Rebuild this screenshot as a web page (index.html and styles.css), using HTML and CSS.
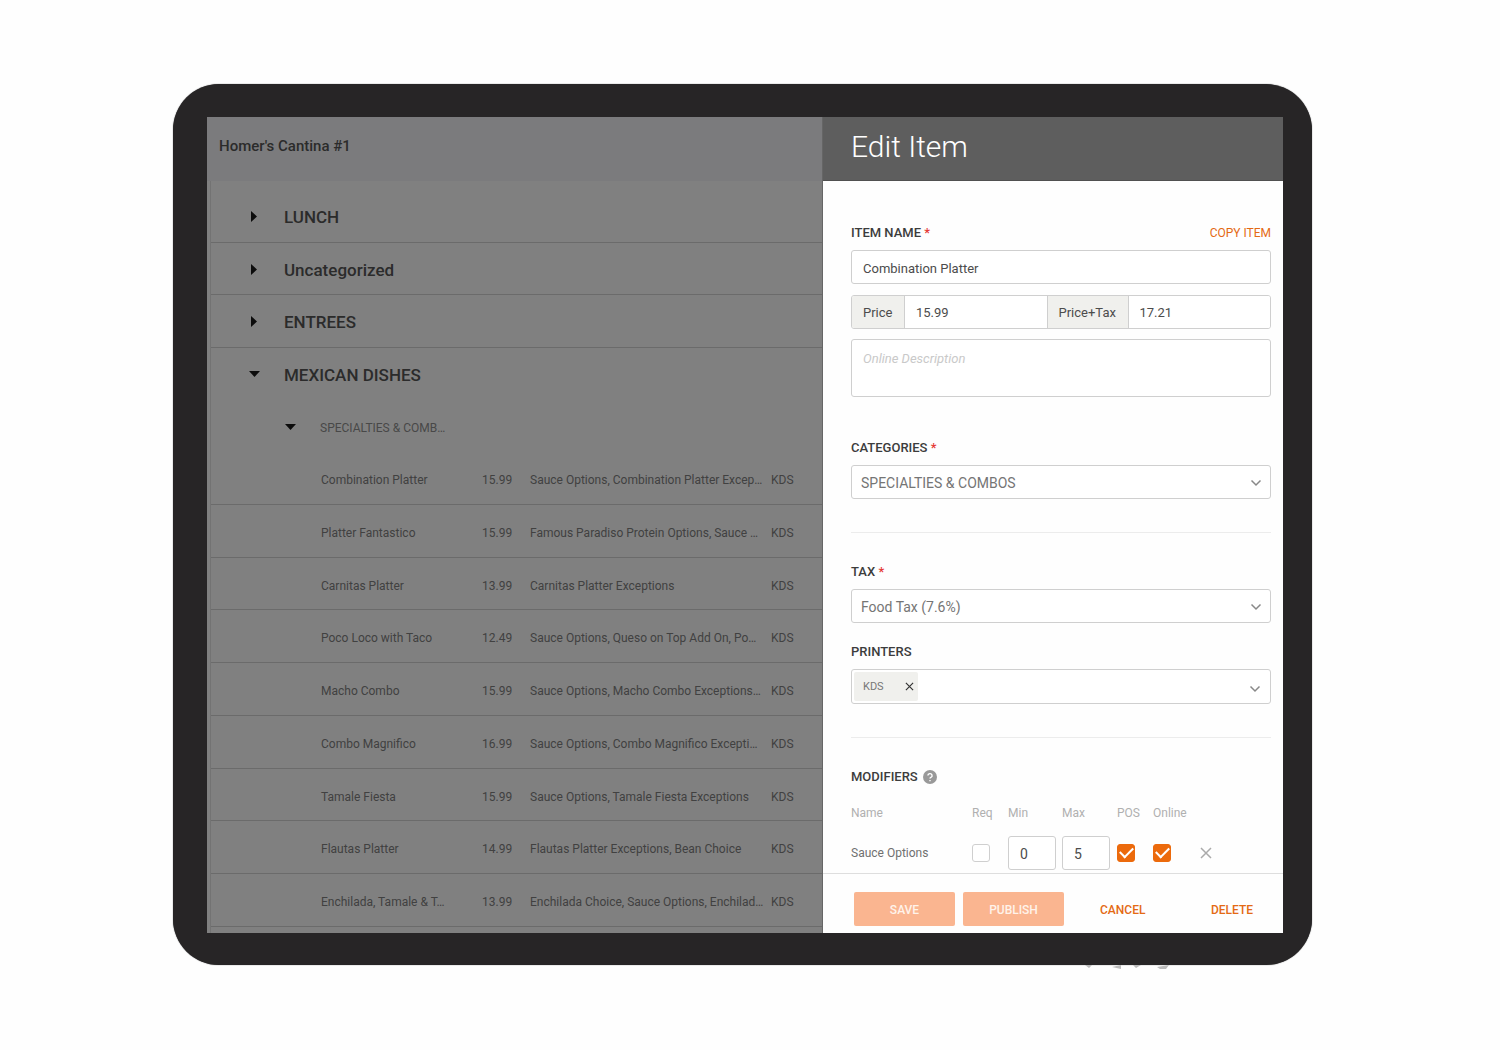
FILE: index.html
```html
<!DOCTYPE html>
<html lang="en">
<head>
<meta charset="utf-8">
<meta name="viewport" content="width=device-width, initial-scale=1">
<title>Edit Item</title>
<link rel="stylesheet" href="styles.css">
</head>
<body>
<div class="device">
  <div class="screen">
    <main class="menu">
      <header class="menu-header"><h1>Homer's Cantina #1</h1></header>
      <div class="menu-body">
        <div class="groups">
          <div class="group"><svg class="arrow" viewBox="0 0 12 12"><path d="M3 0l6 5.500-6 5.500z"/></svg><h2>LUNCH</h2></div>
          <div class="group"><svg class="arrow" viewBox="0 0 12 12"><path d="M3 0l6 5.500-6 5.500z"/></svg><h2>Uncategorized</h2></div>
          <div class="group"><svg class="arrow" viewBox="0 0 12 12"><path d="M3 0l6 5.500-6 5.500z"/></svg><h2>ENTREES</h2></div>
          <div class="group open"><svg class="arrow" viewBox="0 0 12 12"><path d="M1 2h11L6.500 8z"/></svg><h2>MEXICAN DISHES</h2></div>
          <div class="group open subgroup"><svg class="arrow" viewBox="0 0 12 12"><path d="M1 2h11L6.500 8z"/></svg><h3>SPECIALTIES &amp; COMB…</h3></div>
        </div>
        <table class="items">
          <colgroup><col class="col-name"><col class="col-price"><col><col class="col-printer"></colgroup>
          <tbody>
            <tr><td>Combination Platter</td><td>15.99</td><td>Sauce Options, Combination Platter Excep…</td><td>KDS</td></tr>
            <tr><td>Platter Fantastico</td><td>15.99</td><td>Famous Paradiso Protein Options, Sauce …</td><td>KDS</td></tr>
            <tr><td>Carnitas Platter</td><td>13.99</td><td>Carnitas Platter Exceptions</td><td>KDS</td></tr>
            <tr><td>Poco Loco with Taco</td><td>12.49</td><td>Sauce Options, Queso on Top Add On, Po…</td><td>KDS</td></tr>
            <tr><td>Macho Combo</td><td>15.99</td><td>Sauce Options, Macho Combo Exceptions…</td><td>KDS</td></tr>
            <tr><td>Combo Magnifico</td><td>16.99</td><td>Sauce Options, Combo Magnifico Excepti…</td><td>KDS</td></tr>
            <tr><td>Tamale Fiesta</td><td>15.99</td><td>Sauce Options, Tamale Fiesta Exceptions</td><td>KDS</td></tr>
            <tr><td>Flautas Platter</td><td>14.99</td><td>Flautas Platter Exceptions, Bean Choice</td><td>KDS</td></tr>
            <tr><td>Enchilada, Tamale &amp; T…</td><td>13.99</td><td>Enchilada Choice, Sauce Options, Enchilad…</td><td>KDS</td></tr>
          </tbody>
        </table>
      </div>
    </main>
    <form class="panel">
      <header class="panel-header"><h2>Edit Item</h2></header>
      <div class="panel-body">
        <section class="details">
          <div class="label-row">
            <label for="item-name">ITEM NAME <span class="req">*</span></label>
            <a class="copy" href="#">COPY ITEM</a>
          </div>
          <input class="box" id="item-name" type="text" value="Combination Platter">
          <div class="prices">
            <label for="price">Price</label><input id="price" type="text" value="15.99">
            <label for="price-tax">Price+Tax</label><input id="price-tax" type="text" value="17.21">
          </div>
          <textarea class="box" aria-label="Online Description" placeholder="Online Description"></textarea>
        </section>
        <section class="field categories">
          <label for="categories">CATEGORIES <span class="req">*</span></label>
          <div class="select"><select class="box" id="categories"><option>SPECIALTIES &amp; COMBOS</option></select><svg class="chevron" viewBox="0 0 12 8"><path d="M1.500 1.500L6 6l4.500-4.500"/></svg></div>
        </section>
        <hr>
        <section class="field tax">
          <label for="tax">TAX <span class="req">*</span></label>
          <div class="select"><select class="box" id="tax"><option>Food Tax (7.6%)</option></select><svg class="chevron" viewBox="0 0 12 8"><path d="M1.500 1.500L6 6l4.500-4.500"/></svg></div>
        </section>
        <section class="field printers">
          <label for="printers">PRINTERS</label>
          <div class="box tags">
            <span class="tag">KDS<button type="button" aria-label="Remove KDS"><svg viewBox="0 0 10 10"><path d="M1 1l8 8M9 1l-8 8"/></svg></button></span>
            <button class="opener" id="printers" type="button" aria-label="Printers"><svg class="chevron" viewBox="0 0 12 8"><path d="M1.500 1.500L6 6l4.500-4.500"/></svg></button>
          </div>
        </section>
        <hr>
        <section class="modifiers">
          <h3>MODIFIERS <svg class="help" viewBox="0 0 14 14"><circle cx="7" cy="7" r="7"/><path d="M4.900 5.600a2.100 2 0 1 1 3 1.800c-.7.3-.9.6-.9 1.200M7 9.900v1.300"/></svg></h3>
          <table>
            <colgroup><col><col class="w-req"><col class="w-min"><col class="w-max"><col class="w-req"><col class="w-online"><col class="w-remove"></colgroup>
            <thead><tr><th>Name</th><th>Req</th><th>Min</th><th>Max</th><th>POS</th><th>Online</th><th></th></tr></thead>
            <tbody><tr>
              <td>Sauce Options</td>
              <td><input type="checkbox" aria-label="Required"></td>
              <td><input class="box num" type="text" aria-label="Min" value="0"></td>
              <td><input class="box num" type="text" aria-label="Max" value="5"></td>
              <td><input type="checkbox" aria-label="POS" checked></td>
              <td><input type="checkbox" aria-label="Online" checked></td>
              <td><button class="remove" type="button" aria-label="Remove Sauce Options"><svg viewBox="0 0 12 12"><path d="M1 1l10 10M11 1L1 11"/></svg></button></td>
            </tr></tbody>
          </table>
        </section>
      </div>
      <footer class="actions">
        <button class="solid" type="button">SAVE</button>
        <button class="solid" type="button">PUBLISH</button>
        <button class="plain" type="button">CANCEL</button>
        <button class="plain" type="button">DELETE</button>
      </footer>
    </form>
  </div>
  <svg class="scuffs" viewBox="0 0 88 5"><path d="M1 0h7l-3 3zM28 2l9-2v4zM49 0h8l-5 3zM73 2l12-2-3 4h-6z"/></svg>
</div>
</body>
</html>
```
FILE: styles.css
```css
* { box-sizing: border-box; }
body {
  margin: 0;
  padding: 84px 188px 84px 173px;
  background: #fefefe;
  color: #4c4c4c;
  font: 13px/16px Roboto, "Liberation Sans", sans-serif;
}
h1, h2, h3 { margin: 0; font-weight: 500; }
input, select, textarea, button { font: inherit; color: inherit; margin: 0; }
button { border: 0; padding: 0; background: none; cursor: pointer; }
svg { display: block; }

.device {
  position: relative;
  padding: 33px 29px 32px 34px;
  border-radius: 46px;
  background: #272526;
  box-shadow: 0 0 1px #333;
}
.screen {
  display: grid;
  grid-template-columns: minmax(0, 1fr) 461px;
  background: #808080;
}
.scuffs {
  position: absolute;
  right: 140px;
  bottom: -5px;
  width: 88px;
  height: 5px;
  fill: #bbb;
}

/* Menu list, dimmed behind the panel */
.menu { color: #2b2b2b; }
.menu-header {
  display: flex;
  align-items: center;
  height: 64px;
  padding: 0 12px 6px;
  background: #7b7b7d;
}
.menu-header h1 { font-size: 15px; line-height: 20px; }
.menu-body {
  margin-left: 3px;
  padding: 9px 0 6px;
  border-left: 1px solid #737373;
}
.groups {
  display: grid;
  grid-template-rows: repeat(5, 1fr);
  height: 263px;
}
.group {
  display: flex;
  align-items: center;
  gap: 24px;
  padding: 3px 0 0 37px;
  border-bottom: 1px solid #6b6b6b;
}
.group.open { border-bottom-color: transparent; }
.group h2 { font-size: 17px; line-height: 20px; }
.group h3 { font-size: 12px; font-weight: 400; color: #484848; }
.group.subgroup { padding-left: 73px; }
.arrow { width: 12px; height: 12px; fill: #0c0c0c; }
.items {
  width: 100%;
  height: 474px;
  table-layout: fixed;
  border-collapse: collapse;
  font-size: 12px;
  color: #414141;
}
.items td {
  padding: 4px 0 0;
  border-bottom: 1px solid #6b6b6b;
  white-space: nowrap;
}
.items td:first-child { padding-left: 110px; }
.col-name { width: 271px; }
.col-price { width: 48px; }
.col-printer { width: 51px; }

/* Edit panel */
.panel {
  border-left: 1px solid #666;
  background: #fefefe;
}
.panel-header {
  display: flex;
  align-items: center;
  height: 64px;
  padding: 0 28px 3px;
  border-bottom: 1px solid #505050;
  background: #5e5e5e;
  color: #fff;
}
.panel-header h2 { font-size: 30px; line-height: 36px; font-weight: 300; }
.panel-body { padding: 44px 12px 3px 28px; }
.field { display: grid; gap: 9px; }
.label-row { display: flex; justify-content: space-between; margin-bottom: 9px; }
.label-row label, .field > label, .modifiers h3 {
  font-size: 13px;
  font-weight: 500;
  color: #3c3c3c;
}
.req { color: #e53935; }
.copy { font-size: 12px; color: #e46a14; text-decoration: none; }
.box {
  display: block;
  width: 100%;
  height: 34px;
  padding: 2px 11px 0;
  border: 1px solid #cfcfcf;
  border-radius: 3px;
  background: #fff;
}
.prices {
  display: grid;
  grid-template-columns: 53px 1fr 82px 1fr;
  height: 34px;
  margin: 11px 0 10px;
  border: 1px solid #cfcfcf;
  border-radius: 3px;
  overflow: hidden;
}
.prices label {
  padding: 9px 0 0 11px;
  border-right: 1px solid #cfcfcf;
  background: #f0f0ed;
}
.prices input + label { border-left: 1px solid #cfcfcf; }
.prices input { min-width: 0; border: 0; padding: 2px 11px 0; background: #fff; }
textarea.box { height: 58px; padding: 11px; resize: none; }
textarea::placeholder { color: #c9c9c9; font-style: italic; opacity: 1; }
.categories { margin-top: 43px; }
.printers { margin-top: 21px; }
.select { display: grid; align-items: center; }
.select > * { grid-area: 1 / 1; }
.select select { appearance: none; padding: 2px 9px 0; color: #757575; font-size: 14px; }
.chevron {
  width: 12px;
  height: 8px;
  fill: none;
  stroke: #888;
  stroke-width: 1.5;
}
.select .chevron { justify-self: end; margin: 2px 9px 0 0; pointer-events: none; }
hr { height: 1px; margin: 33px 0 31px; border: 0; background: #ececec; }
.box.tags { display: flex; justify-content: space-between; height: 35px; padding: 2px; }
.tag {
  display: flex;
  align-items: center;
  justify-content: space-between;
  width: 64px;
  padding: 0 4px 0 9px;
  border-radius: 2px;
  background: #f0f0ed;
  font-size: 11px;
  color: #777;
}
.tag svg { width: 9px; height: 9px; stroke: #333; stroke-width: 1.3; }
.opener { padding: 4px 7px 0; }
.modifiers h3 { display: flex; align-items: center; gap: 5px; }
.help { width: 14px; height: 14px; fill: #999; }
.help path { fill: none; stroke: #fff; stroke-width: 1.4; }
.modifiers table {
  width: 100%;
  margin-top: 20px;
  table-layout: fixed;
  border-collapse: collapse;
  font-size: 12px;
}
.modifiers th { padding: 0 0 15px; text-align: left; font-weight: 400; color: #b0b0b0; }
.modifiers td { padding: 0; color: #707070; }
.w-req { width: 36px; }
.w-min { width: 54px; }
.w-max { width: 55px; }
.w-online { width: 47px; }
.w-remove { width: 71px; }
.box.num { width: 48px; font-size: 14px; color: #4c4c4c; }
input[type="checkbox"] {
  display: grid;
  place-items: center;
  width: 18px;
  height: 18px;
  border: 1px solid #cfcfcf;
  border-radius: 3px;
  appearance: none;
  background: #fff;
}
input[type="checkbox"]:checked { border-color: #ec6a0c; background: #ec6a0c; }
input[type="checkbox"]:checked::after {
  content: "";
  width: 11px;
  height: 6px;
  margin-bottom: 4px;
  border: solid #fff;
  border-width: 0 0 2px 2px;
  transform: rotate(-45deg);
}
.remove { display: block; }
.remove svg { width: 12px; height: 12px; stroke: #aaa; stroke-width: 1.5; }
.actions {
  display: flex;
  align-items: center;
  gap: 8px;
  padding: 18px 30px 7px 31px;
  border-top: 1px solid #dedede;
  font-size: 12px;
  font-weight: 500;
}
.solid {
  width: 101px;
  height: 34px;
  padding-top: 2px;
  border-radius: 2px;
  background: #fab590;
  color: #fff3ea;
}
.plain { padding-top: 2px; color: #e46a14; }
.solid + .plain { margin: 0 auto 0 28px; }
```
